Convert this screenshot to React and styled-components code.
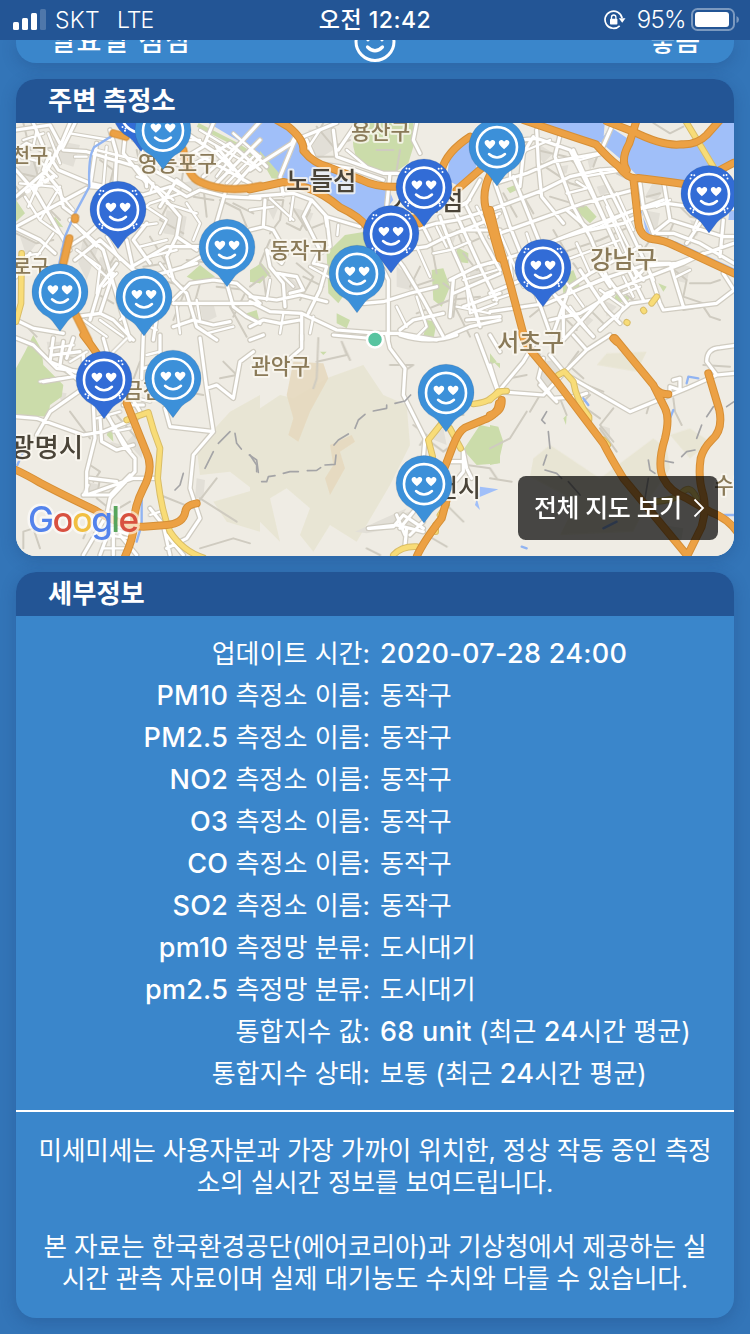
import React from "react";
import styled, { createGlobalStyle } from "styled-components";

const GlobalStyle = createGlobalStyle`
  * { box-sizing: border-box; }
  body {
    margin: 0;
    background: #3274b6;
    font-family: Inter, "Noto Sans CJK KR", sans-serif;
    color: #fff;
  }
`;

const Screen = styled.div`
  width: 750px;
  height: 1334px;
  overflow: hidden;
  background: #3375b8;
`;

const StatusBar = styled.header`
  position: relative;
  z-index: 2;
  height: 40px;
  padding: 0 11px 0 13px;
  display: grid;
  grid-template-columns: 1fr auto 1fr;
  align-items: center;
  background: #235595;
  font-size: 23px;
  line-height: 40px;
`;

const StatusGroup = styled.div`
  display: flex;
  align-items: center;
  justify-content: ${(p) => (p.$end ? "flex-end" : "flex-start")};
  font-weight: 300;
`;

const Carrier = styled.span`
  margin-left: 9px;
  letter-spacing: 0.3px;
`;

const Network = styled.span`
  margin-left: 17px;
  letter-spacing: -0.9px;
`;

const Clock = styled.span`
  font-weight: 500;
  font-size: 23px;
  letter-spacing: 0.5px;
  margin-right: 2px;
`;

const Percent = styled.span`
  margin: 0 5px 0 11px;
  font-size: 24px;
  letter-spacing: -0.6px;
`;

const Content = styled.main`
  padding: 0 16px;
  display: flex;
  flex-direction: column;
  gap: 16px;
`;

const Card = styled.section`
  border-radius: 20px;
  background: #3a86cb;
  box-shadow: 0 4px 16px rgba(20, 50, 100, 0.24);
`;

const ForecastCard = styled(Card)`
  height: 23px;
  border-radius: 0 0 20px 20px;
  padding: 0 34px;
  display: grid;
  grid-template-columns: 1fr 42px 1fr;
  grid-template-rows: 100%;
  align-items: end;
`;

const ForecastText = styled.span`
  font-size: 27px;
  line-height: 36px;
  font-weight: 500;
  margin-bottom: 3px;
  letter-spacing: ${(p) => (p.$end ? 0 : 1.7)}px;
  text-align: ${(p) => (p.$end ? "right" : "left")};
`;

const CardTitle = styled.h2`
  margin: 0;
  height: 44px;
  padding-left: 32px;
  border-radius: 20px 20px 0 0;
  background: #235595;
  font-size: 26.3px;
  font-weight: 600;
  line-height: 44px;
`;

const MapView = styled.div`
  position: relative;
  height: 433px;
  overflow: hidden;
  border-radius: 0 0 20px 20px;
  background: #efece4;

  > svg { display: block; }
`;

const FullMapButton = styled.button`
  position: absolute;
  right: 16px;
  bottom: 16px;
  width: 200px;
  height: 64px;
  padding: 0 13px 0 16px;
  border: 0;
  border-radius: 8px;
  display: flex;
  align-items: center;
  justify-content: space-between;
  background: rgba(0, 0, 0, 0.7);
  color: #fff;
  font: 500 25px Inter, "Noto Sans CJK KR", sans-serif;
  letter-spacing: -0.45px;
  white-space: nowrap;
`;

const ButtonText = styled.span`
  padding-bottom: 5px;
`;

const Details = styled.dl`
  margin: 0;
  height: 494px;
  padding-top: 17px;
`;

const DetailRow = styled.div`
  display: grid;
  grid-template-columns: 1fr 1fr;
  height: 42px;
  font-size: 26px;
  line-height: 42px;
  white-space: nowrap;
`;

const Label = styled.dt`
  padding-right: 5px;
  text-align: right;
`;

const Value = styled.dd`
  margin: 0;
  padding-left: 5px;
`;

const Latin = styled.span`
  font-size: 27px;
  line-height: 1;
  font-weight: 450;
  letter-spacing: 0.3px;
`;

const Notice = styled.div`
  height: 208px;
  padding-top: 23px;
  border-top: 2px solid #fff;
  text-align: center;
  font-size: 25.6px;
  line-height: 32px;
`;

const NoticeText = styled.p`
  margin: 0 0 32px;
  white-space: pre-line;
  letter-spacing: -0.12px;
`;

const MapLabel = styled.text`
  font-family: "Noto Sans CJK KR", sans-serif;
  font-size: ${(p) => p.$size || 21.5}px;
  font-weight: 500;
  fill: ${(p) => (p.$dark ? "#4a4438" : "#8a7a58")};
  stroke: rgba(250, 248, 240, 0.8);
  stroke-width: 4px;
  stroke-linejoin: round;
  paint-order: stroke;
`;

const GoogleMark = styled.text`
  font-family: Inter, sans-serif;
  font-size: 35px;
  font-weight: 500;
  stroke: rgba(255, 255, 255, 0.6);
  stroke-width: 5px;
  stroke-linejoin: round;
  paint-order: stroke;
`;

const rows = [
  ["업데이트 시간:", "2020-07-28 24:00"],
  ["PM10 측정소 이름:", "동작구"],
  ["PM2.5 측정소 이름:", "동작구"],
  ["NO2 측정소 이름:", "동작구"],
  ["O3 측정소 이름:", "동작구"],
  ["CO 측정소 이름:", "동작구"],
  ["SO2 측정소 이름:", "동작구"],
  ["pm10 측정망 분류:", "도시대기"],
  ["pm2.5 측정망 분류:", "도시대기"],
  ["통합지수 값:", "68 unit (최근 24시간 평균)"],
  ["통합지수 상태:", "보통 (최근 24시간 평균)"],
];

/* Latin letters and digits are set slightly heavier and larger than the Hangul. */
function MixedText({ children }) {
  return children
    .split(/([A-Za-z0-9][A-Za-z0-9.:-]*(?: [A-Za-z0-9:]+)*)/)
    .map((part, i) => (i % 2 ? <Latin key={i}>{part}</Latin> : part));
}

/* Map sectors are drawn on a grid three times finer than the screen. */
const sectors = [
  {
    x: 0, y: 120,
    water: "M610,0H780V100L715,62Z",
    stream: "M340,45L282,82Q264,110 268,200L225,280L195,350L178,430",
    park: "M596,9L715,70L780,112V128L705,78L590,20Z M48,240L75,280L48,305Z M165,290L190,322L150,315Z M560,470L600,435L645,470L600,490Z M755,455L780,430V490L750,485Z M740,580L770,570L780,610L750,605Z",
    block: "M160,60L240,75L220,140L155,120Z M70,90L130,120L100,190L50,160Z M500,270L560,290L550,350L490,340Z M250,350L300,370L260,480L235,430Z M300,410L350,430L330,470L290,460Z M540,190L590,180L600,230Z M60,350L110,370L80,410Z M600,560L640,550L650,590L610,610Z",
    minor: "M48,80L100,120L120,190L48,240 M70,9L90,90L180,80 M110,230L180,300 M60,160L150,180L190,250 M48,340L110,370L160,360 M300,120L340,150L330,190 M410,90L430,180L500,220 M520,220L480,300L550,340 M450,350L500,430L430,440 M610,200L620,290 M660,120L720,180 M700,250L760,280 M660,240L720,270L740,320 M560,420L640,430 M480,480L560,500L520,600 M290,370L350,400L300,480 M250,360L310,450 M600,490L570,600 M650,500L740,510L700,590 M690,560L740,650 M50,590L110,650 M290,520L340,550 M500,120L550,150L540,220 M580,230L640,240 M48,200L80,240",
    lane: "M60,110L120,125L170,170 M110,30L100,80 M145,40L180,130 M60,190L160,200L220,270 M75,230L120,300 M120,180L85,260 M180,200L120,300L190,350 M290,90L410,120 M320,80L310,200 M400,60L460,80 M410,170L460,190L450,220 M470,200L520,240 M440,260L500,300L480,340 M400,320L470,310 M420,380L500,360 M450,410L530,390 M240,330L290,380 M255,410L330,480 M230,390L300,440L290,520 M320,350L360,420 M310,500L350,460 M360,600L400,560 M410,600L470,630 M300,600L370,650 M250,600L320,650 M480,430L510,470 M560,250L600,310L580,360 M500,250L590,280 M600,30L700,90 M620,60L760,140 M700,40L780,110 M650,170L710,90 M680,190L760,110 M530,60L600,60 M70,60L130,40 M210,40L330,60 M225,110L260,110 M160,340L110,410 M60,410L120,400 M400,290L450,250L540,220 M620,640L700,620 M530,560L540,640 M590,540L600,600",
    road: "M48,30L150,15L190,90L260,95L410,140L480,220L540,290L530,350L590,390 M48,230L140,150L180,80L210,9 M48,150L110,220L180,340L210,390 M190,80L225,9 M48,90L80,70L150,100L130,150L180,210L190,260L230,290 M48,320L140,270L260,205 M0,300L48,325L120,360L165,400 M100,9L130,80L175,150L270,190L430,225L510,200L560,230L600,210L680,230L780,235 M290,70L270,200L370,210 M330,30L350,100L345,190 M375,50L370,100L440,190 M460,150L570,210 M425,90L440,200 M210,300L310,390L360,560L390,660 M190,390L260,345L320,290 M225,420L300,360L400,450L450,470L590,430 M380,360L400,450L470,590L460,660 M395,440L500,380L600,380 M350,430L300,500L270,600 M440,310L400,360L450,430 M530,350L500,410L520,480L560,520L590,620L650,660 M520,540L570,490L640,480L710,490L780,550 M520,550L780,550 M680,490L700,560L740,590L780,610 M520,620L580,600L640,615L690,605 M300,580L340,600L400,660 M230,590L300,580L340,460 M48,600L100,625L190,640 M48,470L90,400 M650,350L620,400L550,440 M675,220L640,340 M480,260L530,180L570,210 M640,9L610,80L560,110 M780,5L720,70L610,170 M780,60L640,200 M780,110L700,200 M570,140L690,70L780,150 M590,100L750,190 M650,80L730,180 M560,40L650,100L700,150",
    rail: "M180,80L100,220 M160,170L80,215",
    orange: "M340,40L378,50 M550,90Q562,170 600,186Q680,222 780,198 M208,355L190,430 M225,580L265,660 M225,293L225,298",
    yellow: "M65,400L63,550L48,605",
  },
  {
    x: 250, y: 120,
    water: "M0,0H90L150,50L165,100L230,140L340,185L415,205L430,240L410,265L350,300L265,255L195,218L105,180L0,58Z M600,100L660,58L680,145L620,195L590,180Z",
    park: "M305,0H490V80L475,130L430,160L380,150L320,120L310,80Z M0,60L90,140L95,178L65,175Z M230,400L285,345L345,335L350,420L320,470L265,550L235,520Z M260,580L300,600L290,625L260,610Z M0,450L35,430L60,460L30,490L0,485Z M620,380L655,400L655,430L620,425Z M545,450L580,445L600,500L575,560L550,540Z M530,600L560,605L550,660L520,650Z",
    block: "M175,30L250,20L250,90L200,120Z M40,240L90,250L70,300Z M120,260L190,280L170,330Z M440,440L500,480L480,510L440,500Z M120,470L150,500L130,530L100,500Z M590,320L620,340L610,370Z M660,450L710,440L710,480L660,490Z",
    minor: "M40,240L100,240L90,300L60,340 M120,250L170,330L220,310 M180,270L150,330L110,310 M60,360L30,430L60,470 M0,500L40,470L50,540 M140,430L190,470L150,540 M160,470L220,500 M450,430L490,500L550,480 M510,440L480,500 M540,350L560,460 M580,300L610,390L700,350 M620,330L640,380 M660,280L680,340L730,330 M640,400L680,450L740,420 M500,580L600,540L690,530 M580,490L620,520L610,590 M610,550L660,650 M200,20L250,80L300,60 M220,9L180,80 M200,110L270,110 M380,90H430 M450,90L440,150",
    lane: "M0,270L70,260 M60,235L130,300 M130,230L120,300 M225,290L230,320 M265,315L262,345 M90,460L130,500 M180,440L235,470 M50,540L60,480 M500,380L540,470 M450,350L500,340 M550,400L600,390L660,365 M560,320L590,380 M640,480L740,450 M650,500L660,580L740,550 M620,560L720,580 M440,560L470,620 M500,530L530,620L500,650 M680,260L740,370 M620,260L660,240 M700,300L750,280 M210,30L170,90 M290,90L350,140 M100,580L90,640 M190,590L180,640",
    road: "M0,230L130,220L185,240L230,290L330,320 M100,225L90,170L135,60L260,9 M185,240L160,290L210,390L190,430L230,440L210,510L175,580 M40,320L70,330L110,400L95,430L50,390L60,440L100,490L105,560 M0,330L40,320L45,240 M230,290L240,380L210,400 M80,460L140,470L160,510L120,520 M0,530L80,540L150,525L230,545 M0,545L60,575L155,580L260,630L390,640L450,640L560,660 M155,580V660 M0,620L40,600L90,610L150,600 M340,550L400,545L480,520L560,500 M450,630L490,600L580,580 M400,450L415,480V660 M415,380L460,440L520,540L580,650 M490,330L560,310L620,300L750,260 M460,390L530,380L590,350L740,290 M540,360L510,300 M570,290L600,370L640,460L690,620 M600,240L640,330L690,440L740,540 M650,260L700,360L750,450 M750,330L640,330 M750,420L680,440L600,480 M750,460L610,520 M750,520L640,560 M750,590L650,600 M590,650L660,620L750,600 M610,480L600,590 M670,550L690,620 M0,150L125,70L140,40 M170,60L200,130L300,145L400,180 M250,30L260,110L400,160H440L490,170 M265,90L320,9 M0,90L50,140 M420,160L410,260 M500,9L490,60L510,100 M690,180L650,250L600,270",
    orange: "M80,0L115,20Q164,60 160,92Q190,130 240,143L335,180Q378,202 440,200 M0,208Q60,195 100,186Q150,196 175,205Q220,220 270,262Q330,290 352,322 M575,150Q590,95 660,50 M620,210L700,140 M722,160Q696,210 706,260L750,415 M492,280L510,310",
  },
  {
    x: 490, y: 120,
    water: "M130,0H345L340,60L315,75Z M360,20L420,60L440,40L540,76L600,79L650,60L695,0H732V120L685,150L590,185L440,165L395,120L330,65Z M440,190L450,270L480,340L560,365L732,445V455L560,380L470,350Z M720,260H732V300H715Z",
    park: "M425,42L540,75V83L420,62Z M440,155L580,175V185L440,178Z M245,260L290,258L320,290L300,310Z M50,205L75,195L80,210L60,220Z M215,470L250,450L270,500L220,520Z M380,520L420,530L410,550L370,540Z M505,490L530,500L520,515Z",
    block: "M150,75L190,100L160,130L135,90Z M205,140L235,135L230,160L205,165Z M290,110L320,120L300,150Z M320,200L360,190L370,215L330,225Z M490,185L530,200L500,240L465,230Z M460,270L510,280L500,335Z M600,300L640,310L620,350Z M560,430L600,440L590,490L550,480Z M340,540L380,560L350,590Z M280,580L310,600L290,620Z",
    minor: "M140,90L230,110L280,150 M150,130L240,190L310,210 M90,210L130,280 M180,230L280,260 M40,220L80,290 M190,330L230,400 M260,300L320,390 M300,220L340,290 M350,180L400,260 M380,160L420,180 M250,340L420,280 M210,400L330,360L420,320 M560,250L600,290L660,300 M470,230L510,220 M550,310L530,360 M340,60L310,140 M630,320L600,370 M250,430L300,500 M350,400L400,450L470,440 M480,360L440,420 M540,440L590,480L580,530L640,550 M580,570L640,560L660,590L690,600 M600,490L660,490L690,480 M220,590L260,630 M290,560L350,620 M380,500L440,550 M120,590L170,550 M490,9L540,40L580,20 M690,180L732,200",
    lane: "M270,120L340,100 M280,170L400,150 M230,220L290,205L260,185 M340,230L420,390 M380,220L430,330 M200,360L330,320L430,270 M260,370L300,460 M350,260L440,470 M180,400L210,390 M200,430L390,360 M110,340L130,400 M30,340L100,500 M60,420L70,510 M10,540L70,520 M130,500L150,560 M290,500L340,480 M230,490L280,560 M380,600L400,560L330,510 M400,470L430,530 M450,500L400,520 M240,560L300,640 M560,470L600,450 M500,260L540,240 M640,260L610,330 M60,110L60,170 M110,90L180,60",
    road: "M0,70L140,55L240,90L310,230L380,380L430,480L460,540 M15,190L110,160L190,125L330,100 M140,30L145,130L155,230L220,310 M210,45L195,110L250,260L300,350L350,470L410,550 M0,270L160,210L240,170L330,150L405,145 M0,350L140,300L280,250L430,210 M0,430L100,400L250,340L380,290L520,240 M15,190L60,320L120,470L180,640 M70,170L150,370 M130,50L100,100L90,200 M250,90L300,200L380,380 M330,150L410,310L490,480 M230,270L300,330L400,310L440,290 M0,520L120,470 M0,575L170,550L330,480L450,440L560,430L732,370 M220,660L350,520L450,480L580,430L640,400 M190,640L240,500L300,460L450,380 M430,480L480,430L540,430L580,560 M190,520L310,650 M270,450L350,570L390,610 M320,440L360,500 M410,420L460,480 M370,9L330,100 M450,190L460,260L490,340 M520,180L540,300L490,340 M430,270L530,250L600,260L732,265 M540,300L700,350L732,350 M700,300L690,410 M630,310L590,370 M480,460L510,550L520,570L680,550L732,510 M700,460L732,510 M330,630L420,550L490,540 M160,480L220,560L220,650 M180,600L270,580L370,520 M500,340L550,340L630,370L732,430",
    orange: "M100,0Q240,48 318,73Q355,115 385,138Q415,180 445,174Q520,183 582,192 M350,4L430,35Q520,80 575,73Q620,75 650,45L690,0 M440,0L418,70Q390,120 410,150 M430,175L445,310Q450,352 490,358Q520,360 560,380L732,460 M690,150L732,128 M0,270L20,350L60,490L105,660 M370,655L380,665",
    yellow: "M585,0L670,140 M500,530L485,550 M460,570L462,573 M410,607L412,608",
  },
  {
    x: 0, y: 335,
    stream: "M70,350L52,390 M425,495V570L410,620",
    park: "M75,50L100,0L125,45L130,90L190,150L185,185L150,210L145,245L48,240V100Z M320,300L335,260L340,320Z",
    hill: "M690,230L780,180V480L690,410L600,420L590,340Z M640,500L780,460V590L680,560Z",
    block: "M140,20L190,20L200,60L150,70Z M400,300L430,330L425,370L380,320Z M260,440L300,450L280,490L250,480Z M170,170L200,175L190,210Z M330,320L370,330L350,350Z M590,430L615,435L610,490L585,490Z M320,570L390,610L300,620Z",
    minor: "M270,390L300,410L280,440 M300,430L290,490L340,530L390,500 M210,230L270,310 M350,240L410,310 M180,100L250,150 M160,60L230,70 M480,480L580,520L650,430 M600,490L710,560 M70,640V590L100,580L120,640 M670,80L710,120L660,130 M270,560L250,610 M420,80L390,160 M600,640L700,610L750,625 M500,160L610,180",
    lane: "M150,40L220,30 M210,80L260,50 M440,60L480,50 M330,60L380,10 M410,190L450,200 M290,250L360,230 M340,290L390,280 M320,600L390,610 M310,640L390,640 M120,140L180,130 M450,540L480,530 M265,450L250,480",
    road: "M48,245L110,250L250,300L310,290L410,250 M310,10L330,80L420,230 M110,300L150,230L250,160L250,60 M130,140L250,120L150,80L160,9 M48,9L100,30L170,100L240,110 M190,20L180,90L290,180L370,330L405,370V410L330,490L320,540L250,660 M280,210L285,310L260,410V480L400,430H465 M300,250L305,320L350,345L400,330 M320,240L390,350 M220,9L200,70 M240,50L160,60 M430,0L425,130 M480,0V90L430,100 M600,9L620,160L640,290L510,275L495,220 M620,160L650,150L700,190L720,80L760,50 M640,290L580,360L570,460L600,550L560,610L500,640 M250,480L330,480L390,420 M270,430L350,440 M300,660L330,580L390,600 M340,580L340,660 M360,600L410,660 M450,520L490,570L510,660 M500,600L550,660 M430,210L370,210",
    trail: "M655,325L690,290 M705,295L710,325L724,342 M748,360L770,375L775,412 M640,350L615,400 M550,415L540,450L525,465",
    orange: "M250,0Q270,25 290,55 M380,205L440,355Q462,400 430,460Q400,520 402,570Q400,610 375,665 M48,405Q80,420 120,443Q180,475 285,525Q360,574 430,575L500,570Q550,566 556,530Q558,510 590,505",
    yellow: "M380,255L445,232Q460,290 480,340L473,430Q485,530 510,590Q550,650 610,668",
  },
  {
    x: 250, y: 335,
    park: "M640,345L690,270L735,280L750,320V385L680,390Z M210,50L230,50L220,60Z M730,80L750,85V100Z",
    hill: "M230,130L340,90L400,180L470,210L480,330L420,450L320,620L240,570L190,650L150,600L180,520L110,460L60,490L90,620L0,530V240L90,180L130,190Z M250,150L330,110L350,200L290,290Z M330,310L420,260L430,370L340,470Z M20,260L100,230L80,400L30,370Z M160,430L220,420L200,590Z",
    sand: "M130,80L220,85L235,130L180,230L145,320L115,300L130,250L110,180Z M240,330L305,300L315,320L270,350L285,400L240,480L225,430L250,390Z",
    block: "M315,590L380,560L470,520L430,580L350,595Z M540,310L580,280L590,330Z M440,540L480,530L500,570L450,580Z",
    minor: "M205,9L200,130L190,160 M200,80L290,60L275,20L300,75 M420,90H490L460,110 M490,270L530,300L510,330 M630,280L600,330L590,360 M540,320L580,350L620,320 M650,390L720,400L740,430 M350,640L390,660 M530,600L590,635 M580,500L640,560 M440,560L470,590 M590,230L640,240",
    road: "M40,0L0,15 M155,0V40L120,70 M250,0L350,9 M410,0L420,40L465,100L460,180L525,310L520,370 M450,0Q540,30 620,0 M680,0L740,160 M590,270L640,350L650,400L665,430 M590,380H640 M640,350L640,410L620,435 M355,580L440,570L520,590 M360,580L430,575L460,540L520,580 M470,580L465,630 M440,540L465,600 M490,530L450,580 M520,560L480,600",
    trail: "M0,360L20,390V410 M35,440L50,440L55,425L75,422 M100,415L120,410L145,410 M172,407L200,406L212,398 M225,390L255,388L258,360 M252,330L265,315L295,297 M315,280L325,255L345,238 M370,228L410,220V210 M435,205L465,198L482,180",
    water: "M690,455L745,463L680,490L690,525L675,510Z",
    orange: "M500,665Q520,620 575,550L590,495 M583,400L610,330Q625,290 645,278L700,255Q745,240 747,205",
    yellow: "M430,660Q455,633 500,635 M557,590V570 M575,265L535,315L548,365 M600,280L632,340 M670,207Q710,203 722,190L750,172 M570,540L590,510",
  },
  {
    x: 490, y: 335,
    park: "M0,270L25,275L40,320L25,385L0,390Z M0,55L20,80L0,90Z M220,250L230,240L228,270Z",
    hill: "M130,370L180,330L330,430L490,310L530,340L540,400L480,490L430,590L210,600L260,500L120,425Z M320,90L350,55L470,50L440,110Z M540,300L600,280L660,320L600,370Z",
    block: "M160,80L200,75L220,120L170,170L140,150Z M330,270L360,280L360,340L330,330Z M520,570L580,580L570,640Z",
    minor: "M20,170L60,130L110,120 M90,0L150,60 M290,150L340,170 M265,50L235,90L280,130 M300,180L280,200 M110,230L60,310L0,340 M370,220L330,270L370,320 M550,190L555,230L575,270 M480,200L470,235 M210,190L230,240 M0,430L65,440 M120,230L150,180 M260,200L330,250 M640,90L720,95 M330,280L380,350",
    road: "M0,90L25,170L100,80L130,30 M25,170L160,180L220,115L290,45L360,0 M160,70L145,130L190,190L260,185L290,175 M180,60L230,120L420,230L590,160L680,120L732,115 M250,0L290,45 M150,150L200,200 M540,180V155L570,165V130L550,135 M680,120L650,80Q650,40 690,38L732,32 M0,0L30,50",
    trail: "M170,230L155,255L165,265 M175,290L180,340 M160,390L170,360 M165,405L200,415L215,430 M235,440L270,480 M475,375L480,405L495,415 M525,378L550,383 M575,365L590,350L615,345 M650,245L670,215 M635,270L620,310 M710,215L732,200 M475,430L465,490",
    stream: "M590,145L595,125L625,130 M550,225L540,250 M280,190L295,210 M340,580L380,560 M95,635L110,640 M660,540H732",
    orange: "M95,-5Q110,35 125,50L200,140L340,325Q360,365 400,430L592,662L635,575Q650,525 640,480Q623,430 632,370Q640,340 665,315Q700,285 688,225L655,115 M375,10L490,150L525,220Q540,250 525,310Q500,390 520,430Q540,470 590,490L660,530Q715,550 745,595 M495,160Q510,178 535,178 M0,240Q37,230 35,195",
    yellow: "M0,195L25,170L50,168 M205,120L223,110L250,140Q260,200 297,245V255 M340,315L353,330 M500,500Q550,495 570,480Q600,440 620,490",
  },
];

function Layer({ name, ...style }) {
  return (
    <g strokeLinecap="round" strokeLinejoin="round" fill="none" {...style}>
      {sectors.map((s) =>
        s[name] ? <path key={`${s.x}-${s.y}`} transform={`translate(${s.x} ${s.y}) scale(.333333)`} d={s[name]} /> : null
      )}
    </g>
  );
}

const pins = [
  [141, 112, true], [163, 130], [497, 146.5], [424, 187, true], [709, 193.5, true],
  [118, 209.3, true], [391, 233.5, true], [227, 247.3], [543, 267.3, true],
  [357, 273.3], [60, 291.8], [144, 296.5], [173, 378.2], [104, 379.3, true],
  [446, 392.3], [424, 483.5],
];

const HEART = "M0,4.8C-2,3-5.3,.6-5.3-1.9C-5.3-4.9-1.6-5.5 0-2.8C1.6-5.5 5.3-4.9 5.3-1.9C5.3,.6 2,3 0,4.8Z";

const sparkles = [
  [-18.5, -15], [-17.5, -18.5], [-14.7, -18.3],
  [18.5, -15], [17.5, -18.5], [14.7, -18.3],
  [-18.5, 15], [-15.5, 16.4], [-16, 18.7],
  [18.5, 15], [15.5, 16.4], [16, 18.7],
];

function Pin({ x, y, dark }) {
  return (
    <g transform={`translate(${x} ${y})`}>
      <path
        d="M0,39.5L-7.5,29.5Q-9,27.5-12,25.3A28,28 0 1 1 12,25.3Q9,27.5 7.5,29.5Z"
        fill={dark ? "#326cd6" : "#3c90d9"}
        stroke="#2c4a70"
        strokeOpacity=".25"
        strokeWidth=".7"
      />
      {dark && sparkles.map(([cx, cy]) => <circle key={`${cx},${cy}`} cx={cx} cy={cy} r="1" fill="#fff" />)}
      <circle cy=".6" r="20" fill="none" stroke="#fff" strokeWidth="2.6" />
      <path d={HEART} transform="translate(-7.1 -2)" fill="#fff" />
      <path d={HEART} transform="translate(7.1 -2)" fill="#fff" />
      <path d="M-8,7.500Q0,14.500 8,7.500" fill="none" stroke="#fff" strokeWidth="2.500" strokeLinecap="round" />
    </g>
  );
}

function StationMap() {
  return (
    <svg width="718" height="433" viewBox="16 123 718 433" aria-label="주변 측정소 지도">
      <rect x="16" y="123" width="718" height="433" fill="#efece4" />
      <Layer name="hill" fill="#e6e3cd" opacity=".7" />
      <Layer name="sand" fill="#e6d9be" opacity=".85" />
      <Layer name="block" fill="#e2dfd7" />
      <Layer name="park" fill="#cbdcaa" />
      <Layer name="water" fill="#a0bff9" />
      <Layer name="minor" stroke="#cfcbc0" strokeWidth="6" />
      <Layer name="lane" stroke="#d0ccc1" strokeWidth="13" />
      <Layer name="road" stroke="#d0ccc1" strokeWidth="17" />
      <Layer name="lane" stroke="#fff" strokeWidth="7" />
      <Layer name="road" stroke="#fff" strokeWidth="9.5" />
      <Layer name="stream" stroke="#91b4f2" strokeWidth="7" />
      <Layer name="rail" stroke="#fff" strokeWidth="13" strokeDasharray="7 14" />
      <Layer name="trail" stroke="#a4a4a6" strokeWidth="5" />
      <Layer name="yellow" stroke="#d9bd67" strokeWidth="20" />
      <Layer name="yellow" stroke="#f8dc77" strokeWidth="14" />
      <Layer name="orange" stroke="#d68f36" strokeWidth="24" />
      <Layer name="orange" stroke="#eca144" strokeWidth="18" />
      <MapLabel x="138" y="171">영등포구</MapLabel>
      <MapLabel x="351" y="139">용산구</MapLabel>
      <MapLabel x="48.5" y="163" textAnchor="end" $size={20}>양천구</MapLabel>
      <MapLabel x="49.5" y="274" textAnchor="end" $size={20}>구로구</MapLabel>
      <MapLabel x="270" y="258">동작구</MapLabel>
      <MapLabel x="590" y="267.500" $size={24.3}>강남구</MapLabel>
      <MapLabel x="497" y="351" $size={24.3}>서초구</MapLabel>
      <MapLabel x="251" y="374">관악구</MapLabel>
      <MapLabel x="123" y="398">금천구</MapLabel>
      <MapLabel x="714" y="493">수정구</MapLabel>
      <MapLabel x="286" y="190" $size={25.5} $dark>노들섬</MapLabel>
      <MapLabel x="393" y="210" $size={25.5} $dark>서래섬</MapLabel>
      <MapLabel x="10" y="456.500" $size={26.5} $dark>광명시</MapLabel>
      <MapLabel x="481" y="497" textAnchor="end" $size={25} $dark>과천시</MapLabel>
      <circle cx="375" cy="339.500" r="8" fill="#58c4a0" stroke="#fff" strokeWidth="2.500" />
      {pins.map(([x, y, dark]) => <Pin key={`${x}-${y}`} x={x} y={y} dark={dark} />)}
      <GoogleMark x="28" y="531.500" textLength="111">
        <tspan fill="#5383ec">G</tspan><tspan fill="#d85140">o</tspan><tspan fill="#f1bf42">o</tspan><tspan fill="#5383ec">g</tspan><tspan fill="#58a55c">l</tspan><tspan fill="#d85140">e</tspan>
      </GoogleMark>
    </svg>
  );
}

function SignalIcon() {
  return (
    <svg width="33" height="22" viewBox="0 0 33 22">
      <g fill="#fff">
        <rect x="0" y="13" width="6" height="8" rx="1.500" />
        <rect x="9" y="9" width="6" height="12" rx="1.500" />
        <rect x="18" y="4" width="6" height="17" rx="1.500" />
        <rect x="27" y="0" width="6" height="21" rx="1.500" opacity=".2" />
      </g>
    </svg>
  );
}

function RotationLockIcon() {
  return (
    <svg width="22" height="20" viewBox="0 0 22 20">
      <path d="M15.700,15.800A8.600,8.600 0 1 1 18.100,8.200" fill="none" stroke="#fff" strokeWidth="1.700" />
      <path d="M14.800,8.300H21.500L18.200,12.800Z" fill="#fff" />
      <rect x="6" y="8.800" width="7.400" height="5.700" rx=".8" fill="#fff" />
      <path d="M7.500,9V7.200A2.200,2.200 0 0 1 11.900,7.200V9" fill="none" stroke="#fff" strokeWidth="1.300" />
    </svg>
  );
}

function BatteryIcon() {
  return (
    <svg width="48" height="24" viewBox="0 0 48 24">
      <rect x="1" y="1" width="42" height="21" rx="5.500" fill="none" stroke="#fff" strokeOpacity=".4" strokeWidth="2" />
      <rect x="4" y="4" width="34" height="15" rx="3" fill="#fff" />
      <path d="M45.500,8V15Q48,14 48,11.500Q48,9 45.500,8Z" fill="#fff" fillOpacity=".4" />
    </svg>
  );
}

function SmileIcon() {
  return (
    <svg width="42" height="42" viewBox="0 0 42 42">
      <circle cx="21" cy="20.500" r="19" fill="none" stroke="#fff" strokeWidth="3" />
      <path d={HEART} transform="translate(14 16)" fill="#fff" />
      <path d={HEART} transform="translate(28 16)" fill="#fff" />
      <path d="M13.500,26Q21,33.500 28.500,26" fill="none" stroke="#fff" strokeWidth="3.200" strokeLinecap="round" />
    </svg>
  );
}

export default function App() {
  return (
    <Screen>
      <GlobalStyle />
      <StatusBar>
        <StatusGroup>
          <SignalIcon />
          <Carrier>SKT</Carrier>
          <Network>LTE</Network>
        </StatusGroup>
        <Clock>오전 12:42</Clock>
        <StatusGroup $end>
          <RotationLockIcon />
          <Percent>95%</Percent>
          <BatteryIcon />
        </StatusGroup>
      </StatusBar>
      <Content>
        <ForecastCard>
          <ForecastText>일요일 점심</ForecastText>
          <SmileIcon />
          <ForecastText $end>좋음</ForecastText>
        </ForecastCard>
        <Card>
          <CardTitle>주변 측정소</CardTitle>
          <MapView>
            <StationMap />
            <FullMapButton>
              <ButtonText>전체 지도 보기</ButtonText>
              <svg width="12" height="20" viewBox="0 0 12 20">
                <path d="M1.500,1.500L10,10L1.500,18.500" fill="none" stroke="#fff" strokeWidth="1.800" />
              </svg>
            </FullMapButton>
          </MapView>
        </Card>
        <Card>
          <CardTitle>세부정보</CardTitle>
          <Details>
            {rows.map(([label, value]) => (
              <DetailRow key={label}>
                <Label><MixedText>{label}</MixedText></Label>
                <Value><MixedText>{value}</MixedText></Value>
              </DetailRow>
            ))}
          </Details>
          <Notice>
            <NoticeText>{"미세미세는 사용자분과 가장 가까이 위치한, 정상 작동 중인 측정\n소의 실시간 정보를 보여드립니다."}</NoticeText>
            <NoticeText>{"본 자료는 한국환경공단(에어코리아)과 기상청에서 제공하는 실\n시간 관측 자료이며 실제 대기농도 수치와 다를 수 있습니다."}</NoticeText>
          </Notice>
        </Card>
      </Content>
    </Screen>
  );
}
